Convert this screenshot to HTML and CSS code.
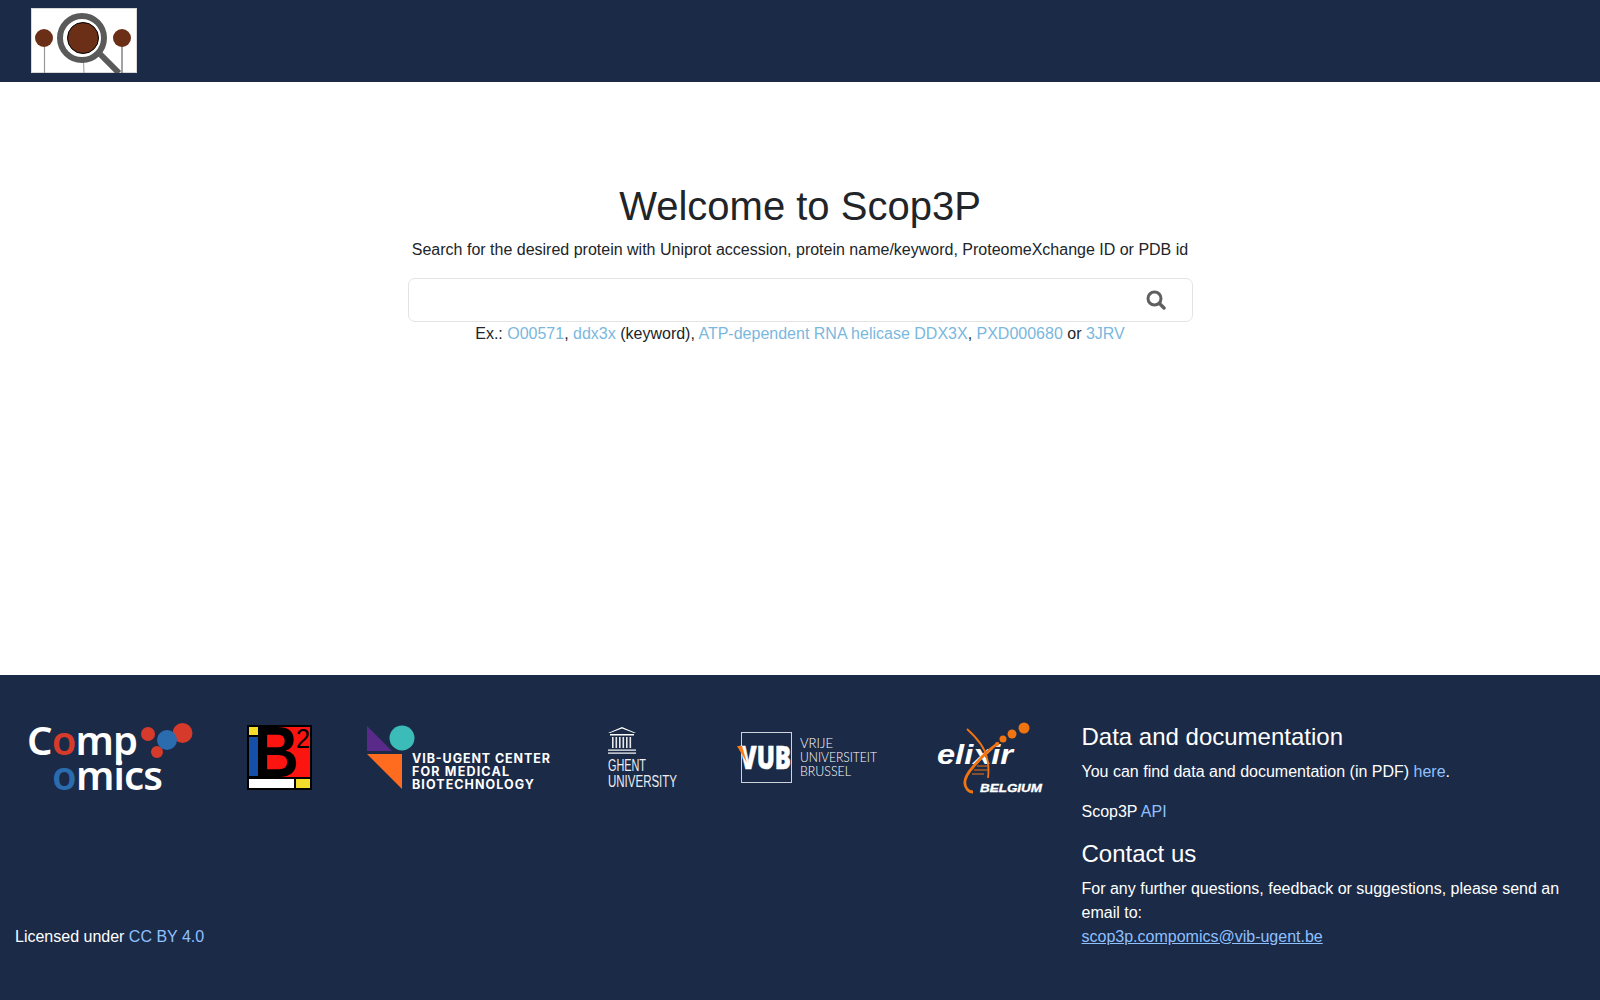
FILE: index.html
```html
<!DOCTYPE html>
<html lang="en">
<head>
    <meta charset="UTF-8">
    <meta name="viewport" content="width=device-width, initial-scale=1.0">
    <title>Scop3P</title>
    <link rel="stylesheet" href="styles.css">
</head>
<body>
    <header class="navbar">
        <a class="brand" href="#">
            <svg width="106" height="65" viewBox="0 0 106 65">
                <rect x="0.5" y="0.5" width="105" height="64" fill="#fff" stroke="#d8d8d8"/>
                <line x1="13.5" y1="38" x2="13.5" y2="65" stroke="#999" stroke-width="1.2"/>
                <line x1="91" y1="38" x2="91" y2="65" stroke="#666" stroke-width="1.2"/>
                <line x1="52.5" y1="52" x2="53" y2="65" stroke="#999" stroke-width="1"/>
                <circle cx="13" cy="30" r="9" fill="#6b2f17"/>
                <circle cx="91" cy="30" r="9" fill="#6b2f17"/>
                <line x1="69" y1="46" x2="88" y2="65" stroke="#5a5a5a" stroke-width="6"/>
                <circle cx="51" cy="30" r="22" fill="#fff" stroke="#5a5a5a" stroke-width="6"/>
                <circle cx="52" cy="30" r="15.5" fill="#6b2f17" stroke="#000" stroke-width="1"/>
            </svg>
        </a>
    </header>

    <main class="search-page">
        <h1>Welcome to Scop3P</h1>
        <p class="lead">Search for the desired protein with Uniprot accession, protein name/keyword, ProteomeXchange ID or PDB id</p>
        <div class="search-box">
            <input type="text" class="search-input">
            <svg class="search-icon" width="20" height="20" viewBox="0 0 20 20">
                <circle cx="8.5" cy="8.5" r="6.5" fill="none" stroke="#5f5f5f" stroke-width="3"/>
                <line x1="13.5" y1="13.5" x2="18" y2="18" stroke="#5f5f5f" stroke-width="3.4" stroke-linecap="round"/>
            </svg>
        </div>
        <p class="examples">Ex.: <a href="#">O00571</a>, <a href="#">ddx3x</a> (keyword), <a href="#">ATP-dependent RNA helicase DDX3X</a>, <a href="#">PXD000680</a> or <a href="#">3JRV</a></p>
    </main>

    <footer class="footer">
        <div class="footer-left">
            <div class="logos">
                <svg width="166" height="76" viewBox="0 0 166 76">
                    <text class="logo-comp" x="0" y="35" textLength="111"><tspan fill="#fff">C</tspan><tspan fill="#d63a2b">o</tspan><tspan fill="#fff">mp</tspan></text>
                    <text class="logo-comp" x="25" y="70" textLength="111"><tspan fill="#2a6cad">o</tspan><tspan fill="#fff">mics</tspan></text>
                    <circle cx="121" cy="14" r="7" fill="#d63a2b"/>
                    <circle cx="155.500" cy="13" r="10" fill="#d63a2b"/>
                    <circle cx="130" cy="32" r="6" fill="#d63a2b"/>
                    <circle cx="140" cy="20" r="10" fill="#2a6cad"/>
                </svg>
                <svg class="logo-ib" width="65" height="76" viewBox="0 0 65 76">
                    <rect y="5" width="65" height="65" fill="#000"/>
                    <rect x="2" y="7" width="9" height="8" fill="#f4dc2a"/>
                    <rect x="2" y="17" width="9" height="39" fill="#1450a8"/>
                    <rect x="18" y="7" width="45" height="50" fill="#fb1410"/>
                    <text class="logo-b" x="7" y="57" textLength="45" lengthAdjust="spacingAndGlyphs">B</text>
                    <text class="logo-two" x="49" y="28" textLength="14" lengthAdjust="spacingAndGlyphs">2</text>
                    <rect x="2" y="59" width="45" height="9" fill="#fff"/>
                    <rect x="49" y="59" width="14" height="9" fill="#f4dc2a"/>
                </svg>
                <svg width="185" height="76" viewBox="0 0 185 76">
                    <polygon points="0,6 25,31 0,31" fill="#5a2a8a"/>
                    <circle cx="35" cy="18" r="12.5" fill="#3bbcb8"/>
                    <polygon points="0,34 35,34 35,69" fill="#ff6c1f"/>
                    <text class="logo-vib" x="45" y="43" textLength="138">VIB-UGENT CENTER</text>
                    <text class="logo-vib" x="45" y="56" textLength="97">FOR MEDICAL</text>
                    <text class="logo-vib" x="45" y="69" textLength="122">BIOTECHNOLOGY</text>
                </svg>
                <svg width="72" height="76" viewBox="0 0 72 76">
                    <polygon points="1,13 15,7 29,13 27,13 15,8.5 3,13" fill="#fff"/>
                    <rect x="3" y="14" width="24" height="1.5" fill="#fff"/>
                    <g fill="#e8e8ea">
                        <rect x="5" y="17" width="1.6" height="11"/>
                        <rect x="8.5" y="17" width="1.6" height="11"/>
                        <rect x="12" y="17" width="1.6" height="11"/>
                        <rect x="15.5" y="17" width="1.6" height="11"/>
                        <rect x="19" y="17" width="1.6" height="11"/>
                        <rect x="22.5" y="17" width="1.6" height="11"/>
                    </g>
                    <rect x="1" y="29.5" width="28" height="1.2" fill="#fff"/>
                    <rect x="1" y="32.5" width="28" height="1.2" fill="#fff"/>
                    <text class="logo-ghent" x="1" y="51" textLength="38" lengthAdjust="spacingAndGlyphs">GHENT</text>
                    <text class="logo-ghent" x="1" y="67" textLength="69" lengthAdjust="spacingAndGlyphs">UNIVERSITY</text>
                </svg>
                <svg width="146" height="76" viewBox="0 0 146 76">
                    <rect x="7.500" y="12.500" width="50" height="50" fill="none" stroke="#cfd3da"/>
                    <text class="logo-vub" x="6" y="49" textLength="51" lengthAdjust="spacingAndGlyphs">VUB</text>
                    <polygon points="3,26 8,26 13,43" fill="#ff7a14"/>
                    <text class="logo-vrije" x="66" y="28" textLength="33" lengthAdjust="spacingAndGlyphs">VRIJE</text>
                    <text class="logo-vrije" x="66" y="42" textLength="77" lengthAdjust="spacingAndGlyphs">UNIVERSITEIT</text>
                    <text class="logo-vrije" x="66" y="56" textLength="51" lengthAdjust="spacingAndGlyphs">BRUSSEL</text>
                </svg>
                <svg width="110" height="76" viewBox="0 0 110 76">
                    <text class="logo-elixir" x="2" y="44" textLength="76" lengthAdjust="spacingAndGlyphs">elixir</text>
                    <path d="M32 9 C42 18 50 28 52 38 C54 46 54 50 53 58" fill="none" stroke="#f07412" stroke-width="1.8"/>
                    <path d="M64 23 C52 30 46 38 38 47 C30 56 28 64 32 69 C34 72 36 72 38 72" fill="none" stroke="#f07412" stroke-width="2.8"/>
                    <path d="M42 46 H54 M39 50 H53 M37 54 H49" stroke="#f07412" stroke-width="1.2"/>
                    <circle cx="62" cy="24" r="2" fill="#f07412"/>
                    <circle cx="68" cy="19" r="3.5" fill="#f07412"/>
                    <circle cx="77" cy="14" r="4.5" fill="#f07412"/>
                    <circle cx="89" cy="8" r="5.5" fill="#f07412"/>
                    <text class="logo-belgium" x="45" y="72" textLength="62" lengthAdjust="spacingAndGlyphs">BELGIUM</text>
                </svg>
            </div>
            <p class="license">Licensed under <a href="#">CC BY 4.0</a></p>
        </div>
        <div class="footer-right">
            <h4>Data and documentation</h4>
            <p>You can find data and documentation (in PDF) <a href="#">here</a>.</p>
            <p>Scop3P <a href="#">API</a></p>
            <h4>Contact us</h4>
            <p class="contact">For any further questions, feedback or suggestions, please send an email to:<br><a class="mail" href="#">scop3p.compomics@vib-ugent.be</a></p>
        </div>
    </footer>
</body>
</html>
```

FILE: styles.css
```css
* {
    box-sizing: border-box;
}

body {
    margin: 0;
    min-height: 1000px;
    display: flex;
    flex-direction: column;
    font-family: "Liberation Sans", Arial, sans-serif;
    font-size: 16px;
    line-height: 1.5;
    color: #212529;
    background-color: #fff;
}

a {
    text-decoration: none;
}

.navbar {
    height: 82px;
    padding: 8px 31px;
    background-color: #1b2a47;
}

.brand {
    display: block;
    width: 106px;
    height: 65px;
}

.brand svg {
    display: block;
}

.search-page {
    flex: 1;
    display: flex;
    flex-direction: column;
    align-items: center;
    padding-top: 100px;
}

.search-page h1 {
    margin: 0 0 8px;
    font-size: 40px;
    font-weight: 400;
    line-height: 1.2;
}

.lead {
    margin: 0 0 16px;
}

.search-box {
    width: 785px;
    height: 44px;
    position: relative;
    border: 1px solid #e3e3e3;
    border-radius: 7px;
}

.search-input {
    width: 100%;
    height: 100%;
    border: 0;
    border-radius: 7px;
    outline: none;
    background: transparent;
}

.search-icon {
    position: absolute;
    right: 26px;
    top: 11px;
}

.examples {
    margin: 0;
}

.examples a {
    color: #7ab8de;
}

.footer {
    height: 325px;
    display: flex;
    color: #fff;
    background-color: #1b2a47;
}

.footer a {
    color: #8fc0ff;
}

.footer-left {
    width: 1081.5px;
    display: flex;
    flex-direction: column;
    justify-content: space-between;
    padding: 45px 0 51px 15px;
}

.logos {
    display: flex;
    align-items: flex-start;
    gap: 55px;
    padding-left: 12px;
}

.logos svg {
    flex: none;
    overflow: visible;
}

.logos .logo-ib {
    margin-left: -1px;
}

.license {
    margin: 0;
}

.footer-right {
    flex: 1;
    padding: 48px 32px 0 0;
}

.footer-right h4 {
    margin: 0 0 8px;
    font-size: 24px;
    font-weight: 500;
    line-height: 1.2;
}

.footer-right p {
    margin: 0 0 16px;
}

.footer-right .mail {
    text-decoration: underline;
}

.logo-comp {
    font-family: "Noto Sans", sans-serif;
    font-size: 40px;
    font-weight: 600;
}

.logo-b {
    font-family: "Liberation Sans", sans-serif;
    font-size: 72px;
    font-weight: 700;
    fill: #000;
}

.logo-two {
    font-family: "Liberation Sans", sans-serif;
    font-size: 28px;
    fill: #000;
}

.logo-vib {
    font-family: "Inter", sans-serif;
    font-size: 12.5px;
    font-weight: 700;
    fill: #fff;
}

.logo-ghent {
    font-family: "Liberation Sans", sans-serif;
    font-size: 16px;
    fill: #eceef1;
}

.logo-vub {
    font-family: "Open Sans", sans-serif;
    font-size: 32px;
    font-weight: 800;
    fill: #fff;
    stroke: #fff;
    stroke-width: 0.6;
}

.logo-vrije {
    font-family: "Lato", sans-serif;
    font-size: 13.5px;
    font-weight: 300;
    fill: #fff;
}

.logo-elixir {
    font-family: "Liberation Sans", sans-serif;
    font-size: 28px;
    font-style: italic;
    font-weight: 700;
    fill: #fff;
}

.logo-belgium {
    font-family: "Liberation Sans", sans-serif;
    font-size: 10.5px;
    font-style: italic;
    font-weight: 700;
    fill: #fff;
    stroke: #fff;
    stroke-width: 0.3;
}
```
